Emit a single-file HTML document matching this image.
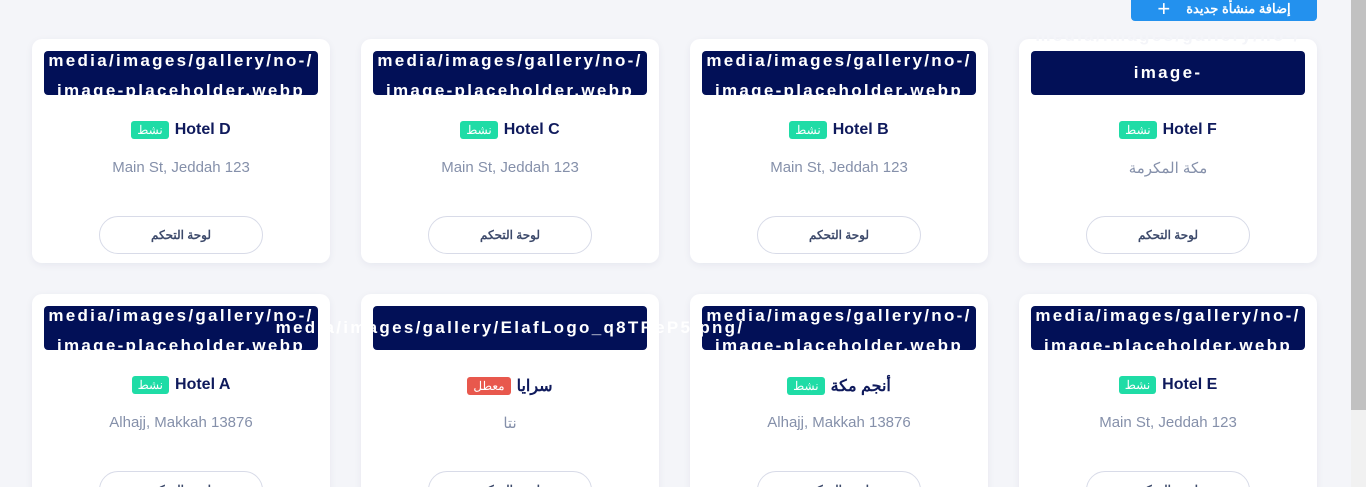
<!DOCTYPE html>
<html dir="ltr" style="height:487px;overflow:hidden"><head><meta charset="utf-8"><style>
body{margin:0;width:1366px;height:487px;overflow:hidden;background:#f4f5f9;font-family:"Liberation Sans","Noto Sans CJK SC",sans-serif;position:relative}
.sb{position:absolute;left:1351px;top:0;width:15px;height:487px;background:#f1f1f1;z-index:5}
.sb div{position:absolute;left:0;top:0;width:15px;height:410px;background:#c1c1c1}
.add{position:absolute;left:1131px;top:-8px;width:186px;height:29px;background:#2391ee;border-radius:4px;color:#fff;font-weight:bold;font-size:13px;display:flex;align-items:center;justify-content:center;gap:16px;padding-top:4px;box-sizing:border-box}
.add span.p{font-size:22px;font-weight:normal}
.card{position:absolute;width:298px;height:224px;background:#fff;border-radius:10px;box-shadow:0 2px 8px rgba(20,30,80,.06)}
.img{position:absolute;left:12px;top:12px;width:274px;height:44px;background:#021057;border-radius:4px;clip-path:inset(-60px -200px 0 -200px)}
.img p{margin:0;position:absolute;left:-100px;right:-100px;text-align:center;color:#fff;font-size:17px;font-weight:bold;letter-spacing:2.3px;white-space:nowrap}
.t{position:absolute;left:0;right:0;top:82px;text-align:center;font-size:16px;font-weight:bold;color:#0f1a5c;display:flex;justify-content:center;align-items:center;gap:6px}
.b{font-size:12px;color:#fff;background:#1fdca6;border-radius:3px;padding:2px 6px;font-weight:normal}
.b.r{background:#e8584d}
.a{position:absolute;left:0;right:0;top:120px;text-align:center;font-size:15px;color:#8590aa}
.btn{position:absolute;left:67px;top:177px;width:162px;height:36px;border:1px solid #d8dbe8;border-radius:19px;text-align:center;line-height:36px;font-size:12px;font-weight:bold;color:#3d4a6b}
</style></head><body>
<div class="add"><span class="p">+</span><span>إضافة منشأة جديدة</span></div>

<div class="card" style="left:32px;top:39px"><div class="img"><p style="top:0px">media/images/gallery/no-/</p><p style="top:30px">image-placeholder.webp</p></div><div class="t"><span class="b">نشط</span>Hotel D</div><div class="a">Main St, Jeddah 123</div><div class="btn">لوحة التحكم</div></div>
<div class="card" style="left:361px;top:39px"><div class="img"><p style="top:0px">media/images/gallery/no-/</p><p style="top:30px">image-placeholder.webp</p></div><div class="t"><span class="b">نشط</span>Hotel C</div><div class="a">Main St, Jeddah 123</div><div class="btn">لوحة التحكم</div></div>
<div class="card" style="left:690px;top:39px"><div class="img"><p style="top:0px">media/images/gallery/no-/</p><p style="top:30px">image-placeholder.webp</p></div><div class="t"><span class="b">نشط</span>Hotel B</div><div class="a">Main St, Jeddah 123</div><div class="btn">لوحة التحكم</div></div>
<div class="card" style="left:1019px;top:39px"><div class="img"><p style="top:-25px;color:#f4f5f9">media/images/gallery/no-/</p><p style="top:12px">image-</p></div><div class="t"><span class="b">نشط</span>Hotel F</div><div class="a">مكة المكرمة</div><div class="btn">لوحة التحكم</div></div>

<div class="card" style="left:32px;top:294px"><div class="img"><p style="top:0px">media/images/gallery/no-/</p><p style="top:30px">image-placeholder.webp</p></div><div class="t"><span class="b">نشط</span>Hotel A</div><div class="a">Alhajj, Makkah 13876</div><div class="btn">لوحة التحكم</div></div>
<div class="card" style="left:361px;top:294px;z-index:2"><div class="img"><p style="top:12px">media/images/gallery/ElafLogo_q8TReP5.png/</p></div><div class="t"><span class="b r">معطل</span>سرايا</div><div class="a">نتا</div><div class="btn">لوحة التحكم</div></div>
<div class="card" style="left:690px;top:294px"><div class="img"><p style="top:0px">media/images/gallery/no-/</p><p style="top:30px">image-placeholder.webp</p></div><div class="t"><span class="b">نشط</span>أنجم مكة</div><div class="a">Alhajj, Makkah 13876</div><div class="btn">لوحة التحكم</div></div>
<div class="card" style="left:1019px;top:294px"><div class="img"><p style="top:0px">media/images/gallery/no-/</p><p style="top:30px">image-placeholder.webp</p></div><div class="t"><span class="b">نشط</span>Hotel E</div><div class="a">Main St, Jeddah 123</div><div class="btn">لوحة التحكم</div></div>
<div class="sb"><div></div></div>
</body></html>
